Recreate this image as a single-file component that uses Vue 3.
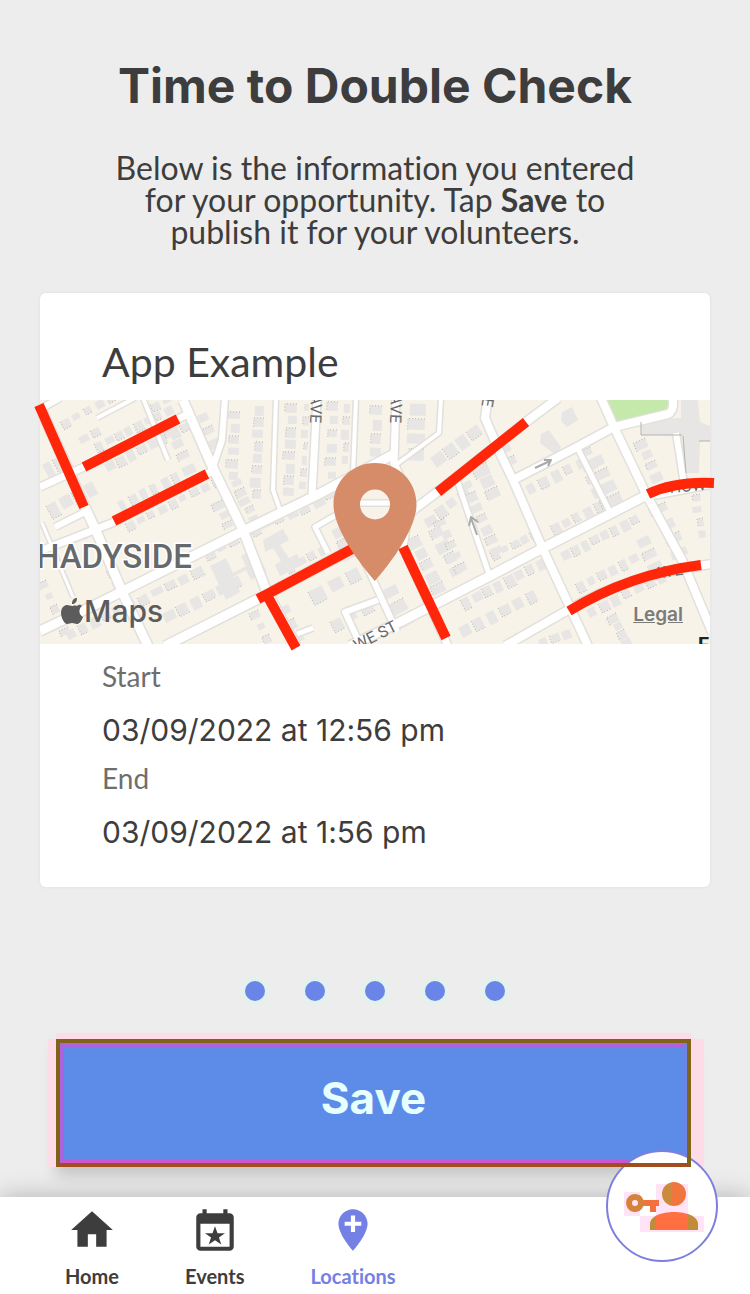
<template>
  <div class="page">
    <main class="content">
      <header class="intro">
        <h1>Time to Double Check</h1>
        <p>
          Below is the information you entered<br />
          for your opportunity. Tap <strong>Save</strong> to<br />
          publish it for your volunteers.
        </p>
      </header>

      <section class="card">
        <h2>App Example</h2>

        <div class="map">
          <svg viewBox="40 400 670 244" role="img" aria-label="Map of the event location">
            <defs>
              <clipPath id="map-area">
                <rect x="40" y="400" width="670" height="244" />
              </clipPath>
            </defs>
            <g clip-path="url(#map-area)">
              <rect class="land" x="40" y="400" width="670" height="244" />
              <g class="building">
                <g
                  v-for="b in buildings"
                  :key="b.id"
                  :transform="`translate(${b.x} ${b.y}) rotate(${b.angle})`"
                >
                  <rect :width="b.w" :height="b.h" />
                  <path v-if="b.shaded" class="shade" :d="`M0 0V${b.h}H${b.w}`" />
                </g>
                <path d="M641 422 677 418H681V400H698L700 422 710 426V441H700L699 473H685L682 435H641z" />
                <path d="M541 434l8-4 12 17-5 8-16-12zM562 412l10-5 6 13-11 7-6-6z" />
                <path d="M263 540l20-11 6 11-9 5 9 13 8-4 5 11-22 11-5-11 6-4-8-13-8 4z" />
                <path d="M210 566l16-8 7 15 13-7-5-10 14-8 12 24-16 8-5-10-13 7 7 15-14 8z" />
              </g>
              <path class="park" d="M604 400 614 424 669 412V400z" />
              <g class="road-edge">
                <path v-for="(r, i) in roads" :key="i" :d="r.d" :stroke-width="r.w + 3" />
              </g>
              <g class="road">
                <path v-for="(r, i) in roads" :key="i" :d="r.d" :stroke-width="r.w" />
              </g>
              <path class="outline" d="M641 422V435H682M699 441H710M683 436 686 473" />
              <path class="arrow" d="M535 468l15-7m-6-1 7 0-3 6M477 535l-6-17m-2 8 2-9 7 5" />
              <g class="street">
                <text transform="translate(311 394) rotate(92)">AVE</text>
                <text transform="translate(391 394) rotate(92)">AVE</text>
                <text transform="translate(483 397) rotate(100)">E</text>
                <text transform="translate(357 651) rotate(-27)">WE ST</text>
                <text transform="translate(655 579) rotate(-9)">AVE</text>
                <text transform="translate(670 493) rotate(-5)">HOW</text>
                <text class="dark" x="698" y="652">F</text>
              </g>
              <text class="district" x="36" y="568">HADYSIDE</text>
              <path
                class="apple"
                d="M77 606c2-2 4-1 5 0-4 3-3 9 1 11-2 5-4 7-6 7-2 0-3-1-5-1s-3 1-5 1c-3 0-6-7-6-11 0-6 4-8 6-8 2 0 4 1 5 1s3-1 5 0zM72 604c0-4 2-6 5-6 0 4-2 6-5 6z"
              />
              <text class="maps" x="84" y="622">Maps</text>
            </g>
            <g class="mark">
              <path d="M39 405 84 507M84 467 178 419M114 521 207 474" />
              <path d="M258 599 352 549M268 597 296 648M403 547 446 638M438 492 526 422" />
              <path d="M648 494Q675 481 714 483M569 611Q630 574 701 565" />
            </g>
            <path
              class="pin"
              fill-rule="evenodd"
              d="M375 463c-23 0-41.500 18-41.500 41.500C333.500 535 375 581 375 581s41.500-46 41.500-76.500C416.500 481 398 463 375 463zm0 26.500a15 15 0 1 1 0 30 15 15 0 0 1 0-30z"
            />
          </svg>
          <a class="legal" href="#">Legal</a>
        </div>

        <dl class="times">
          <template v-for="time in times" :key="time.label">
            <dt>{{ time.label }}</dt>
            <dd>{{ time.value }}</dd>
          </template>
        </dl>
      </section>

      <div class="steps" aria-label="Step 5 of 5">
        <span v-for="n in 5" :key="n"></span>
      </div>

      <div class="save-frame">
        <button class="save" type="button">Save</button>
      </div>
    </main>

    <nav class="tabs">
      <a
        v-for="tab in tabs"
        :key="tab.label"
        href="#"
        :class="{ active: tab.active }"
      >
        <svg viewBox="0 0 24 24" aria-hidden="true">
          <path fill-rule="evenodd" :d="tab.icon" />
        </svg>
        <span>{{ tab.label }}</span>
      </a>

      <button class="account" type="button" aria-label="Account">
        <svg viewBox="0 0 112 112" aria-hidden="true">
          <defs>
            <linearGradient id="head" x1="0" x2="1">
              <stop offset="0.4" stop-color="#cc8a3c" />
              <stop offset="0.4" stop-color="#ef773d" />
            </linearGradient>
            <linearGradient id="body" x1="0" x2="1">
              <stop offset="0.12" stop-color="#c18c3a" />
              <stop offset="0.12" stop-color="#ff6f3f" />
              <stop offset="0.79" stop-color="#ff6f3f" />
              <stop offset="0.79" stop-color="#c18c3a" />
            </linearGradient>
            <linearGradient id="key" x1="0" x2="1">
              <stop offset="0.55" stop-color="#d5833c" />
              <stop offset="0.55" stop-color="#f4713e" />
            </linearGradient>
          </defs>
          <path class="glow" d="M18 42h16v24H18zM50 34h32v32H50zM34 66h64v16H34z" />
          <path
            fill="url(#key)"
            fill-rule="evenodd"
            d="M29 44a9 9 0 0 1 8.500 6H53v6h-3v6h-6v-6h-6.500A9 9 0 1 1 29 44zm0 6a3 3 0 1 0 0 6 3 3 0 0 0 0-6z"
          />
          <circle cx="68" cy="44" r="12" fill="url(#head)" />
          <path d="M44 80v-6c0-8 12-12 24-12s24 4 24 12v6z" fill="url(#body)" />
        </svg>
      </button>
    </nav>
  </div>
</template>

<script setup>
const times = [
  { label: 'Start', value: '03/09/2022 at 12:56 pm' },
  { label: 'End', value: '03/09/2022 at 1:56 pm' },
]

const tabs = [
  { label: 'Home', icon: 'M10 20v-6h4v6h5v-8h3L12 3 2 12h3v8z' },
  {
    label: 'Events',
    icon: 'M6 2h2v2h8V2h2v2h1a2 2 0 0 1 2 2v14a2 2 0 0 1-2 2H5a2 2 0 0 1-2-2V6a2 2 0 0 1 2-2h1zM5 9v11h14V9zM12 10.200l1.200 3.300h3.600l-2.900 2.100 1.100 3.400-3-2.100-3 2.100 1.100-3.400-2.900-2.100h3.600z',
  },
  {
    label: 'Locations',
    active: true,
    icon: 'M12 2C8.140 2 5 5.140 5 9c0 5.250 7 13 7 13s7-7.750 7-13c0-3.860-3.140-7-7-7zm4 8h-3v3h-2v-3H8V8h3V5h2v3h3z',
  },
]

const roads = [
  // long avenues
  { w: 9, d: 'M40 407 84 505 97 533 125 598 148 646' },
  { w: 9, d: 'M183 400 212 466 243 530 266 590 298 650' },
  { w: 9, d: 'M40 631 97 604 123 591 243 531 317 495 396 453' },
  { w: 9, d: 'M165 646 260 598 352 549' },
  { w: 9, d: 'M350 646 400 622 490 576 543 548 645 496 714 483' },
  { w: 8, d: 'M488 396 485 418 500 453 513 480 542 547 588 646' },
  { w: 8, d: 'M601 398 614 427 646 494 682 560 712 632' },
  { w: 8, d: 'M505 646 568 610Q630 574 712 564' },
  { w: 8, d: 'M400 520 440 490 526 422 558 398' },
  { w: 8, d: 'M513 480 577 447 614 427 668 414Q674 412 673 398' },
  // side streets
  { w: 7, d: 'M40 487 84 467 178 419 190 413' },
  { w: 7, d: 'M40 551 112 523 207 474 214 470' },
  { w: 6, d: 'M225 398 222 440 213 467' },
  { w: 4, d: 'M276 398 273 490 280 510' },
  { w: 7, d: 'M317 398 312 495' },
  { w: 4, d: 'M356 398 353 474' },
  { w: 7, d: 'M396 398 394 463 410 500 403 547 448 646' },
  { w: 4, d: 'M441 398 439 433 397 464' },
  { w: 5, d: 'M345 510 315 527 328 553M350 503H394' },
  { w: 6, d: 'M364 560 397 632M378 600 345 612 361 646' },
  { w: 5, d: 'M457 480 489 574' },
  { w: 5, d: 'M577 447 610 512' },
  { w: 6, d: 'M676 433 684 484' },
  { w: 4, d: 'M97 418 135 398M143 398 168 460' },
  { w: 6, d: 'M40 409 60 398M55 527 85 512' },
  { w: 3, d: 'M42 523 73 597' },
  { w: 5, d: 'M243 531 266 590M297 634 313 628' },
]

// rows of houses: x, y, angle, count, step, width, height
const rows = [
  [60, 422, -30, 5, 13, 9, 9],
  [78, 438, -28, 2, 14, 11, 9],
  [94, 444, -27, 8, 11, 9, 10],
  [104, 464, -27, 8, 12, 10, 11],
  [150, 405, -25, 3, 13, 10, 8],
  [117, 502, -27, 6, 12, 8, 13],
  [125, 524, -27, 9, 12, 9, 9],
  [42, 465, -28, 2, 11, 9, 20],
  [46, 506, -28, 4, 14, 12, 15],
  [68, 540, -28, 2, 15, 12, 8],
  [46, 580, 65, 5, 13, 8, 10],
  [110, 553, 65, 3, 14, 9, 12],
  [175, 425, 65, 4, 14, 9, 14],
  [206, 412, 65, 3, 14, 9, 12],
  [240, 412, 92, 6, 12, 9, 12],
  [264, 406, 92, 8, 12, 10, 11],
  [297, 404, 92, 8, 12, 10, 12],
  [309, 404, 92, 7, 13, 9, 7],
  [338, 402, 92, 6, 14, 9, 11],
  [350, 404, 92, 5, 13, 10, 8],
  [382, 406, 92, 4, 14, 11, 12],
  [426, 404, 92, 4, 15, 12, 18],
  [205, 555, -27, 7, 13, 11, 7],
  [240, 478, 65, 6, 10, 8, 12],
  [222, 500, 65, 4, 11, 8, 12],
  [65, 632, -27, 6, 13, 10, 11],
  [137, 598, -27, 5, 15, 12, 10],
  [162, 614, -27, 6, 15, 12, 12],
  [258, 610, 65, 4, 13, 8, 10],
  [288, 604, 65, 3, 15, 10, 10],
  [308, 592, -27, 4, 21, 15, 15],
  [287, 515, -27, 5, 14, 12, 8],
  [285, 565, -27, 4, 12, 9, 10],
  [340, 526, 62, 3, 13, 10, 12],
  [330, 622, -27, 3, 17, 12, 12],
  [395, 584, 62, 3, 16, 12, 18],
  [418, 535, 63, 5, 13, 11, 14],
  [434, 514, 63, 5, 14, 11, 14],
  [444, 518, 65, 5, 12, 8, 12],
  [430, 458, -36, 4, 15, 13, 14],
  [434, 510, -36, 3, 14, 11, 12],
  [470, 480, 65, 7, 12, 9, 13],
  [486, 462, 65, 3, 13, 12, 16],
  [508, 442, 65, 2, 14, 10, 13],
  [460, 600, -27, 8, 12, 10, 12],
  [458, 628, -27, 6, 15, 11, 13],
  [490, 553, -27, 5, 11, 9, 9],
  [525, 486, -27, 5, 14, 10, 12],
  [550, 526, -27, 5, 12, 9, 11],
  [601, 454, 65, 4, 14, 11, 25],
  [590, 447, 65, 2, 13, 9, 12],
  [560, 553, -27, 8, 11, 9, 11],
  [575, 584, -27, 6, 12, 9, 11],
  [586, 610, -27, 8, 13, 10, 11],
  [645, 438, 65, 4, 12, 9, 13],
  [648, 535, 65, 3, 14, 10, 15],
  [665, 502, 65, 4, 16, 10, 18],
  [698, 482, 82, 5, 12, 8, 9],
  [616, 613, 62, 4, 9, 9, 11],
  [538, 640, -20, 3, 12, 10, 9],
]

const buildings = rows.flatMap(([x, y, angle, count, step, w, h], row) => {
  const rad = (angle * Math.PI) / 180
  return Array.from({ length: count }, (_, i) => ({
    id: `${row}-${i}`,
    x: Math.round(x + Math.cos(rad) * step * i),
    y: Math.round(y + Math.sin(rad) * step * i),
    w: w - ((row + i) % 3),
    h: h - ((row * 2 + i * 3) % 4),
    shaded: (row + i) % 2 === 0,
    angle,
  }))
})
</script>

<style>
body {
  margin: 0;
  background: #ededed;
}
</style>

<style scoped>
* {
  box-sizing: border-box;
}

.page {
  display: flex;
  flex-direction: column;
  min-height: 100vh;
  color: #3d3d3d;
  background: #ededed;
  font-family: Lato, 'Liberation Sans', sans-serif;
  font-variant-ligatures: none;
}

.content {
  flex: 1;
  padding: 58px 40px 30px;
}

.intro {
  text-align: center;
}

h1 {
  margin: 0 0 38px;
  font-family: Inter, 'Liberation Sans', sans-serif;
  font-size: 48px;
  font-weight: 700;
  line-height: 56px;
}

.intro p {
  margin: 0 0 45px;
  font-size: 32px;
  line-height: 32px;
}

.card {
  padding: 45px 0 33px;
  border-radius: 6px;
  background: #fff;
  box-shadow: 0 0 4px rgba(0, 0, 0, 0.06);
}

h2 {
  margin: 0 0 14px;
  padding: 0 62px;
  font-size: 41px;
  font-weight: 400;
  line-height: 48px;
}

.map {
  position: relative;
}

.map svg {
  display: block;
  width: 100%;
  overflow: visible;
}

.land {
  fill: #f7f3e9;
}

.building {
  fill: #e8e6e4;
}

.shade {
  fill: none;
  stroke: #b9b6b2;
  stroke-dasharray: 1 2;
}

.park {
  fill: #c5e8ab;
}

.road-edge,
.road,
.mark,
.outline,
.arrow {
  fill: none;
  stroke-linejoin: round;
}

.road-edge {
  stroke: #e2e0dc;
}

.road {
  stroke: #fff;
}

.outline {
  stroke: #b5b3b0;
}

.arrow {
  stroke: #a9a9a9;
  stroke-width: 2;
}

.mark {
  stroke: #ff260a;
  stroke-width: 10;
}

.pin {
  fill: #d68c69;
}

.street {
  fill: #66686b;
  font-family: Roboto, sans-serif;
  font-size: 16px;
}

.street .dark {
  fill: #222;
  font-size: 20px;
  font-weight: 700;
}

.district {
  fill: #66696c;
  stroke: #fff;
  stroke-width: 3px;
  paint-order: stroke;
  font-family: Roboto, sans-serif;
  font-size: 33px;
  font-weight: 500;
}

.apple,
.maps {
  fill: #5c5c5c;
}

.maps {
  font-family: Inter, sans-serif;
  font-size: 30px;
  font-weight: 500;
}

.legal {
  position: absolute;
  right: 27px;
  bottom: 18px;
  color: #7b7b79;
  font-family: Inter, sans-serif;
  font-size: 19px;
  font-weight: 600;
  line-height: 22px;
}

.times {
  margin: 0;
  padding: 16px 62px 0;
}

dt {
  margin-bottom: 16px;
  color: #6e6e6e;
  font-size: 28px;
  line-height: 32px;
}

dd {
  margin: 0;
  font-family: Inter, 'Liberation Sans', sans-serif;
  font-size: 30px;
  line-height: 44px;
}

dd + dt {
  margin-top: 10px;
}

.steps {
  display: flex;
  justify-content: center;
  gap: 40px;
  margin: 94px 0 38px;
}

.steps span {
  width: 20px;
  height: 20px;
  border-radius: 50%;
  background: #6b84e8;
  box-shadow: 0 0 5px 2px #d9f5ee;
}

.save-frame {
  position: relative;
  margin: 0 19px 0 16px;
  box-shadow: -8px 0 0 #fddce7, 13px 0 0 #fddce7, 0 -6px 0 #fddce7,
    0 8px 14px rgba(0, 0, 0, 0.18);
}

/* The focus frame stays above the round account button */
.save-frame::after {
  position: absolute;
  z-index: 3;
  inset: 0;
  border: 4px solid #80631a;
  border-bottom-color: #a04d20;
  content: '';
  pointer-events: none;
}

.save {
  display: block;
  width: 100%;
  height: 128px;
  padding: 0 0 12px;
  border: 8px solid #ac63dd;
  border-right-color: #6b84e8;
  border-bottom-color: #cf55cf;
  border-bottom-width: 7px;
  color: #e6ffff;
  background: #5d8ce8;
  font-family: Inter, 'Liberation Sans', sans-serif;
  font-size: 44px;
  font-weight: 700;
}

.tabs {
  position: relative;
  display: flex;
  gap: 66px;
  padding: 8px 65px 6px;
  background: #fff;
  box-shadow: 0 0 24px rgba(0, 0, 0, 0.25);
}

.tabs a {
  display: flex;
  flex-direction: column;
  align-items: center;
  gap: 10px;
  color: #3d3d3d;
  font-size: 20px;
  font-weight: 700;
  line-height: 23px;
  text-decoration: none;
}

.tabs a svg {
  width: 50px;
  height: 50px;
  fill: currentColor;
}

.tabs .active {
  color: #7480e4;
}

.account {
  position: absolute;
  z-index: 2;
  top: -47px;
  right: 32px;
  width: 112px;
  height: 112px;
  padding: 0;
  border: 2px solid #7c80dc;
  border-radius: 50%;
  background: #fff;
}

.account svg {
  display: block;
  width: 112px;
  height: 112px;
  margin: -2px;
}

.glow {
  fill: #ffe4f8;
}
</style>
